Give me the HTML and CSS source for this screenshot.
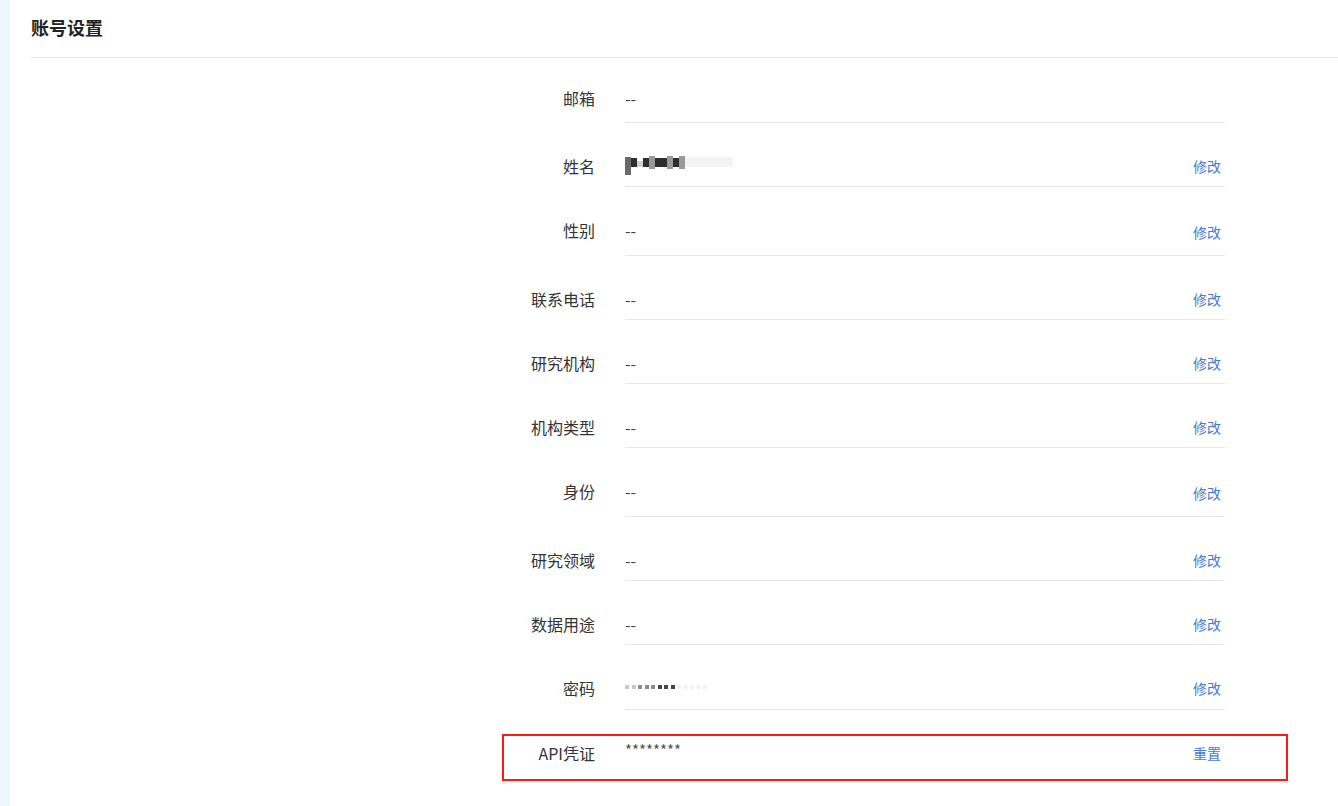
FILE: index.html
```html
<!DOCTYPE html>
<html>
<head>
    <title>账号设置</title>
    <meta charset="utf-8">
    <link rel="stylesheet" href="styles.css">
</head>
<body>

<div class="layout">
    <div class="side-strip"></div>

    <div class="main">
        <div class="header">
            <h1>账号设置</h1>
        </div>

        <div class="form">
            <div class="row first">
                <div class="label">邮箱</div>
                <div class="value"><span>--</span></div>
            </div>
            <div class="row">
                <div class="label">姓名</div>
                <div class="value">
                    <span class="mosaic">
                        <i class="m3"></i><i class="m1"></i><i class="m4"></i><i class="m1"></i><i class="m2"></i><i class="m1"></i><i class="m1"></i><i class="m2"></i><i class="m1"></i><i class="m2"></i><i class="m5"></i><i class="m5"></i><i class="m5"></i><i class="m5"></i><i class="m5"></i><i class="m5"></i>
                    </span>
                    <a class="action" href="#">修改</a>
                </div>
            </div>
            <div class="row tall">
                <div class="label">性别</div>
                <div class="value"><span>--</span><a class="action low" href="#">修改</a></div>
            </div>
            <div class="row">
                <div class="label">联系电话</div>
                <div class="value"><span>--</span><a class="action" href="#">修改</a></div>
            </div>
            <div class="row">
                <div class="label">研究机构</div>
                <div class="value"><span>--</span><a class="action" href="#">修改</a></div>
            </div>
            <div class="row">
                <div class="label">机构类型</div>
                <div class="value"><span>--</span><a class="action" href="#">修改</a></div>
            </div>
            <div class="row tall">
                <div class="label">身份</div>
                <div class="value"><span>--</span><a class="action low" href="#">修改</a></div>
            </div>
            <div class="row">
                <div class="label">研究领域</div>
                <div class="value"><span>--</span><a class="action" href="#">修改</a></div>
            </div>
            <div class="row">
                <div class="label">数据用途</div>
                <div class="value"><span>--</span><a class="action" href="#">修改</a></div>
            </div>
            <div class="row pwd">
                <div class="label">密码</div>
                <div class="value">
                    <span class="dots">
                        <i class="d1"></i><i class="d1"></i><i class="d2"></i><i class="d2"></i><i class="d2"></i><i class="d3"></i><i class="d3"></i><i class="d3"></i><i class="d4"></i><i class="d4"></i><i class="d4"></i><i class="d4"></i><i class="d4"></i>
                    </span>
                    <a class="action" href="#">修改</a>
                </div>
            </div>
            <div class="row last">
                <div class="label">API凭证</div>
                <div class="value plain"><span class="stars">********</span><a class="action" href="#">重置</a></div>
                <div class="highlight"></div>
            </div>
        </div>
    </div>
</div>

</body>
</html>
```

FILE: styles.css
```css
body {
    margin: 0px;
    font-family: "Noto Sans CJK SC", "Liberation Sans", sans-serif;
    color: #333333;
    background: #ffffff;
}

.layout {
    display: flex;
    min-height: 806px;
}

.side-strip {
    width: 10px;
    flex-shrink: 0;
    background-color: #eef6ff;
}

.main {
    flex: 1;
    padding-left: 21px;
}

.header {
    height: 42px;
    padding-top: 15px;
    border-bottom: 1px solid #e6e6e6;
}

h1 {
    margin: 0px;
    font-size: 18px;
    line-height: 24px;
    font-weight: bold;
    color: #222222;
}

.form {
    margin-left: 444px;
}

.row {
    display: flex;
    position: relative;
    padding-top: 32px;
    font-size: 16px;
    line-height: 22px;
}

.row.first {
    padding-top: 29px;
}

.label {
    width: 120px;
    margin-right: 30px;
    text-align: right;
    color: #333333;
}

.value {
    width: 596px;
    padding-right: 4px;
    padding-bottom: 9px;
    border-bottom: 1px solid #e8e8e8;
    display: flex;
    justify-content: space-between;
    align-items: flex-start;
    color: #444444;
}

.row.first .value {
    padding-bottom: 13px;
}

.row.tall .value {
    padding-bottom: 14px;
}

.row.pwd .value {
    padding-bottom: 10px;
}

.value.plain {
    border-bottom: none;
}

.action {
    font-size: 14px;
    color: #4a78cf;
    text-decoration: none;
}

.action.low {
    position: relative;
    top: 2px;
}

.stars {
    font-size: 15px;
    color: #555555;
    position: relative;
    top: -3px;
}

.mosaic {
    display: inline-flex;
    align-items: flex-start;
    height: 22px;
    overflow: hidden;
    filter: blur(0.7px);
}

.mosaic i {
    display: inline-block;
    width: 6px;
}

.mosaic .m1 { background: #2e2e2e; height: 9px; margin-top: 3px; }
.mosaic .m2 { background: #9a9a9a; height: 13px; margin-top: 1px; }
.mosaic .m3 { background: #6a6a6a; height: 18px; margin-top: 2px; }
.mosaic .m4 { background: #d0d0d0; height: 6px; margin-top: 6px; }
.mosaic .m5 { background: #f4f4f4; height: 10px; margin-top: 2px; width: 8px; }

.dots {
    display: inline-flex;
    align-items: center;
    height: 20px;
    filter: blur(0.3px);
}

.dots i {
    display: inline-block;
    width: 4px;
    height: 4px;
    margin-right: 2.5px;
}

.dots .d1 { background: #c8c8c8; }
.dots .d2 { background: #8c8c8c; }
.dots .d3 { background: #444444; }
.dots .d4 { background: #f3f3f3; }

.highlight {
    position: absolute;
    left: 27px;
    top: 24px;
    width: 786px;
    height: 47px;
    box-sizing: border-box;
    border: 2px solid #ff1a1a;
    pointer-events: none;
}
```
